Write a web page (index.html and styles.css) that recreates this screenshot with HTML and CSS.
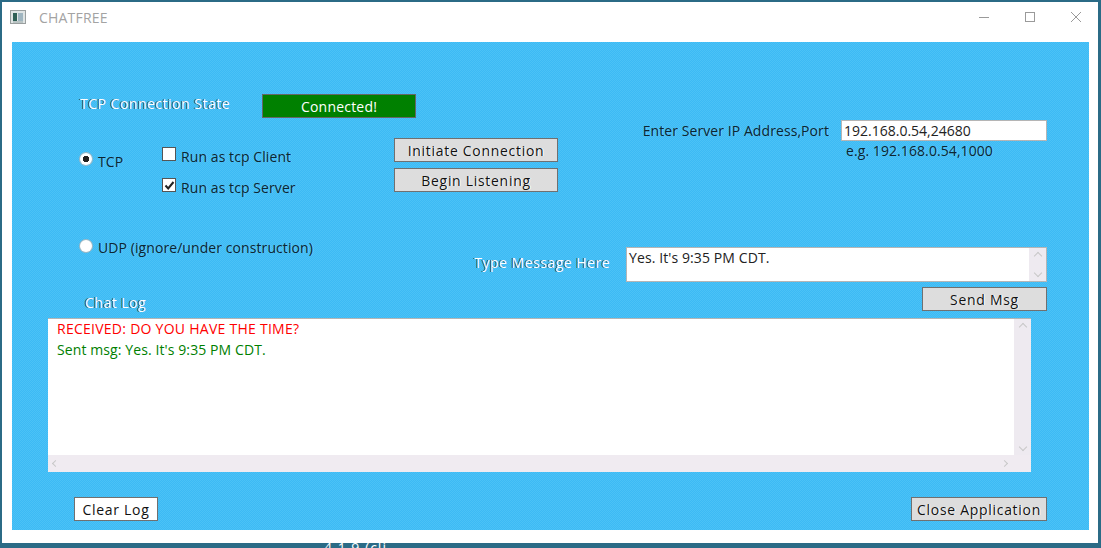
FILE: index.html
```html
<!DOCTYPE html>
<html lang="en">
<head>
<meta charset="utf-8">
<title>CHATFREE</title>
<link rel="stylesheet" href="styles.css">
</head>
<body>
<div class="desktop">
  <div class="window">
    <header class="titlebar">
      <svg class="app-icon" width="16" height="16" viewBox="0 0 16 16"><rect x="0.5" y="0.5" width="15" height="13" fill="#dfe4e4" stroke="#9a9f9f"/><rect x="3" y="3" width="4" height="8" fill="#2f5f55"/><rect x="8" y="3" width="5" height="8" fill="#9fb5c0"/><rect x="3" y="11" width="10" height="2" fill="#b9c4c4"/></svg>
      <span class="app-title">CHATFREE</span>
      <div class="win-controls">
        <svg width="12" height="12" viewBox="0 0 12 12"><path d="M1 6.5H11" stroke="#9a9a9a" fill="none"/></svg>
        <svg width="12" height="12" viewBox="0 0 12 12"><rect x="1.5" y="1.5" width="9" height="9" stroke="#9a9a9a" fill="none"/></svg>
        <svg width="12" height="12" viewBox="0 0 12 12"><path d="M1 1L11 11M11 1L1 11" stroke="#9a9a9a" fill="none"/></svg>
      </div>
    </header>
    <main class="panel">
      <section class="top">
        <div class="left-col">
          <div class="state-row">
            <span class="label light state-label">TCP Connection State</span>
            <span class="state">Connected!</span>
          </div>
          <div class="mode-row">
            <label class="radio-item tcp"><span class="radio on"></span><span class="label dark">TCP</span></label>
            <div class="checks">
              <label class="check-item"><span class="box"></span><span class="label dark">Run as tcp Client</span></label>
              <label class="check-item"><span class="box"><svg width="11" height="11" viewBox="0 0 11 11"><path d="M1.5 5.5L4.2 8.5L9.5 2" fill="none" stroke="#222" stroke-width="2"/></svg></span><span class="label dark">Run as tcp Server</span></label>
            </div>
            <div class="actions">
              <button class="btn wide">Initiate Connection</button>
              <button class="btn wide">Begin Listening</button>
            </div>
          </div>
          <label class="radio-item udp"><span class="radio"></span><span class="label dark">UDP (ignore/under construction)</span></label>
        </div>
        <div class="server">
          <span class="label dark server-label">Enter Server IP Address,Port</span>
          <div class="server-field">
            <div class="ip-input">192.168.0.54,24680</div>
            <span class="label dark hint">e.g. 192.168.0.54,1000</span>
          </div>
        </div>
      </section>
      <section class="message-row">
        <span class="label light">Type Message Here</span>
        <div class="msg-input">
          <span class="msg-text">Yes. It's 9:35 PM CDT.</span>
          <div class="vscroll short"><i class="up"></i><i class="down"></i></div>
        </div>
      </section>
      <section class="log-head">
        <span class="label light">Chat Log</span>
        <button class="btn send">Send Msg</button>
      </section>
      <section class="log">
        <div class="log-body">
          <div class="log-text">
            <p class="received">RECEIVED: DO YOU HAVE THE TIME?</p>
            <p class="sent">Sent msg: Yes. It's 9:35 PM CDT.</p>
          </div>
          <div class="vscroll"><i class="up"></i><i class="down"></i></div>
        </div>
        <div class="hscroll"><i class="left"></i><i class="right"></i></div>
      </section>
      <footer class="bottom">
        <button class="btn clear">Clear Log</button>
        <button class="btn close">Close Application</button>
      </footer>
    </main>
  </div>
  <div class="behind">4.1.9 (cli...</div>
</div>
</body>
</html>
```
FILE: styles.css
```css
* { box-sizing: border-box; }
html, body { margin: 0; height: 100%; }
body { font-family: "Open Sans", "Noto Sans", sans-serif; font-size: 14px; overflow: hidden; }
.desktop { position: relative; width: 1101px; height: 548px; background: #2b6b86; padding: 2px 3px 0 2px; overflow: hidden; }
.window { height: 541px; background: #fff; display: flex; flex-direction: column; padding: 0 9px 13px 10px; }
.behind { position: absolute; left: 324px; top: 538px; color: #fff; font-size: 14px; letter-spacing: 1px; }
.titlebar { height: 40px; display: flex; align-items: center; }
.app-icon { margin: -8px 0 0 -2px; }
.app-title { margin: -10px 0 0 13px; font-size: 14px; letter-spacing: .2px; color: #a3a3a3; }
.win-controls { margin: -10px 7px 0 auto; display: flex; gap: 34px; }
.panel { flex: 1; background-color: #42bdf5; background-image: repeating-conic-gradient(#3cbaf5 0 25%, #4cc2f6 0 50%); background-size: 2px 2px; padding: 0 42px 0 36px; display: flex; flex-direction: column; }
.label { white-space: nowrap; }
.light { color: #fff; letter-spacing: .5px; text-shadow: -1px 0 0 rgba(0,0,0,.7); }
.dark { color: #0c2633; letter-spacing: .08px; text-shadow: 1px 0 0 rgba(255,255,255,.18); }
.top { display: flex; justify-content: space-between; height: 205px; padding: 52px 0 0 32px; }
.state-row { display: flex; align-items: center; gap: 32px; }
.state-label { margin-top: -6px; }
.state { width: 154px; height: 24px; background: #008000; border: 1px solid #666; color: #fff; letter-spacing: .2px; display: flex; align-items: center; justify-content: center; }
.mode-row { display: flex; margin-top: 21px; }
.radio-item, .check-item { display: flex; align-items: center; }
.radio-item .label, .check-item .label { padding-top: 4px; }
.tcp { width: 82px; height: 30px; gap: 6px; padding-top: 10px; }
.checks { display: flex; flex-direction: column; width: 232px; gap: 7px; padding-top: 3px; }
.check-item { gap: 5px; height: 24px; }
.box { width: 14px; height: 14px; background: #fff; border: 1px solid #555; display: flex; align-items: center; justify-content: center; }
.radio { width: 12px; height: 12px; border-radius: 50%; background: #fff; box-shadow: 0 0 0 1px #9fb8c4; display: block; }
.radio.on { background: radial-gradient(circle, #222 0 3px, #fff 3.5px); }
.actions { display: flex; flex-direction: column; gap: 6px; margin-top: -1px; }
.btn { font: inherit; padding: 0; height: 24px; border: 1px solid #707070; background: #dddddd; color: #111; letter-spacing: .7px; text-shadow: 1px 0 0 #fff; }
.wide { width: 164px; }
.udp { margin-top: 37px; gap: 6px; }
.server { display: flex; gap: 12px; padding-top: 27px; align-items: flex-start; }
.server-field { margin-top: -1px; }
.ip-input { width: 206px; height: 21px; background: #fff; border: 1px solid #b5b5b5; color: #222; padding-left: 2px; line-height: 19px; }
.hint { display: block; margin: 0 0 0 5px; }
.message-row { display: flex; justify-content: flex-end; align-items: center; gap: 16px; height: 35px; }
.message-row .label { margin-top: -5px; }
.msg-input { width: 421px; height: 35px; background: #fff; border: 1px solid #b5b5b5; display: flex; justify-content: space-between; color: #222; padding-left: 2px; }
.msg-text { letter-spacing: .1px; }
.vscroll { width: 17px; background: #eeeaf0; display: flex; flex-direction: column; justify-content: space-between; align-items: center; padding: 5px 0; }
.vscroll i { display: block; width: 6px; height: 6px; border-left: 1px solid #c8c8c8; border-top: 1px solid #c8c8c8; }
.vscroll .up { transform: rotate(45deg); }
.vscroll .down { transform: rotate(225deg); }
.log-head { display: flex; justify-content: space-between; align-items: flex-start; height: 37px; padding: 5px 0 0 37px; }
.log-head .label { margin-top: 6px; }
.send { width: 125px; }
.log { width: 983px; height: 154px; border-top: 1px solid #b5b5b5; margin: -1px 0 0 0; display: flex; flex-direction: column; background: #fff; }
.log-body { flex: 1; display: flex; justify-content: space-between; }
.log-text { padding: 0 0 0 9px; }
.log-text p { margin: 0; line-height: 20.5px; }
.received { color: #f00; letter-spacing: .26px; }
.sent { color: #008000; letter-spacing: .1px; }
.hscroll { height: 17px; background: #f0ebf1; display: flex; justify-content: space-between; align-items: center; padding: 0 24px 0 5px; }
.hscroll i { display: block; width: 5px; height: 5px; border-left: 1px solid #c8c8c8; border-top: 1px solid #c8c8c8; }
.hscroll .left { transform: rotate(-45deg); }
.hscroll .right { transform: rotate(135deg); }
.bottom { flex: 1; display: flex; justify-content: space-between; align-items: flex-start; padding: 25px 0 0 26px; }
.clear { width: 84px; background: #fff; }
.close { width: 136px; }
```
